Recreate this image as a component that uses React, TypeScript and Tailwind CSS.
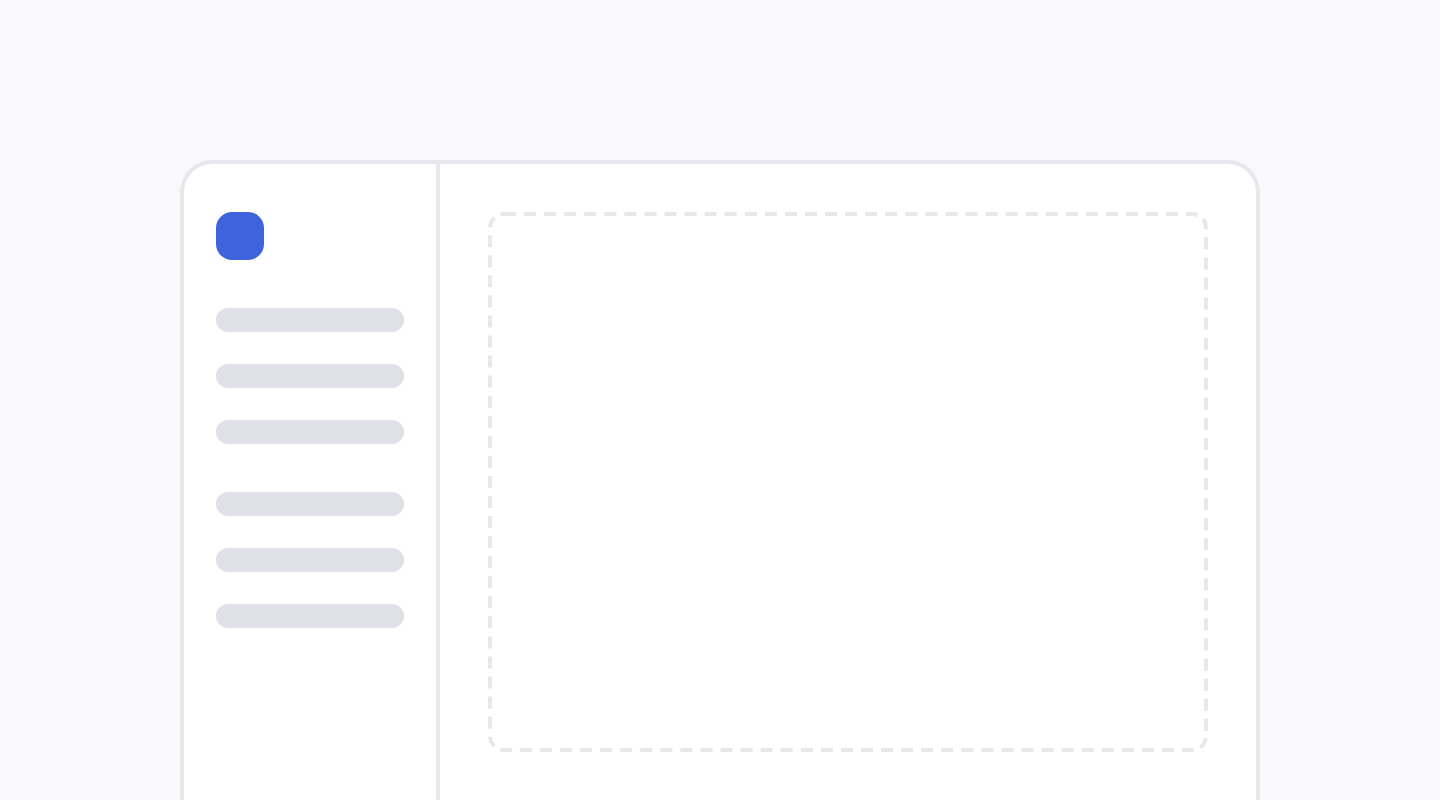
import React from "react"

const navGroups = [
  ["one", "two", "three"],
  ["four", "five", "six"],
]

const Sidebar = () => {
  return (
    <aside className="w-64 shrink-0 border-r-4 border-[#e8e8ec] px-8 pt-12 flex flex-col gap-12">
      {/* Logo */}
      <div className="size-12 rounded-2xl bg-[#3e63dd]" />

      {/* Navigation placeholders */}
      {navGroups.map((group) => (
        <ul key={group[0]} className="flex flex-col gap-8">
          {group.map((item) => (
            <li key={item} className="h-6 rounded-full bg-[#e0e1e6]" />
          ))}
        </ul>
      ))}
    </aside>
  )
}

const DropArea = () => {
  return (
    <div className="w-full aspect-[4/3] rounded-2xl overflow-hidden">
      {/* The outer half of the stroke is clipped, so 8 shows as 4 */}
      <svg className="block size-full" aria-hidden="true">
        <rect
          width="100%"
          height="100%"
          rx="16"
          className="fill-none stroke-[#e8e8ec]"
          strokeWidth="8"
          strokeDasharray="12 8"
          pathLength={2484}
        />
      </svg>
    </div>
  )
}

const App = () => {
  return (
    <div className="h-screen overflow-hidden bg-[#f9f9fb] pt-40 flex flex-col">
      <div className="w-full max-w-[1080px] mx-auto grow flex rounded-t-[32px] border-4 border-b-0 border-[#e8e8ec] bg-white">
        <Sidebar />
        <main className="grow p-12">
          <DropArea />
        </main>
      </div>
    </div>
  )
}

export default App
